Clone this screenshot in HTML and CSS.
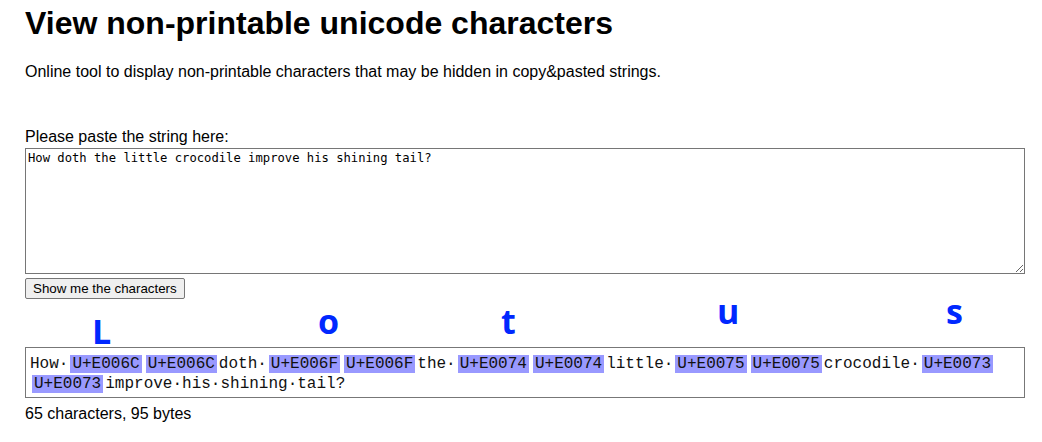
FILE: index.html
```html
<!DOCTYPE html>
<html lang="en">
<head>
<meta charset="utf-8">
<title>View non-printable unicode characters</title>
<link rel="stylesheet" href="styles.css">
</head>
<body>
<div class="page">
  <h1 class="title">View non-printable unicode characters</h1>
  <p class="intro">Online tool to display non-printable characters that may be hidden in copy&amp;pasted strings.</p>
  <form class="form">
    <label class="label" for="input">Please paste the string here:</label>
    <textarea id="input" class="input">How doth the little crocodile improve his shining tail?</textarea>
    <button type="button" class="btn">Show me the characters</button>
  </form>
  <div class="output">How·<span class="cp">U+E006C</span><span class="cp">U+E006C</span>doth·<span class="cp">U+E006F</span><span class="cp">U+E006F</span>the·<span class="cp">U+E0074</span><span class="cp">U+E0074</span>little·<span class="cp">U+E0075</span><span class="cp">U+E0075</span>crocodile·<span class="cp">U+E0073</span><span class="cp">U+E0073</span>improve·his·shining·tail?</div>
  <div class="count">65 characters, 95 bytes</div>
  <div class="notes">
    <span class="note note-l">L</span>
    <span class="note note-o">o</span>
    <span class="note note-t">t</span>
    <span class="note note-u">u</span>
    <span class="note note-s">s</span>
  </div>
</div>
</body>
</html>
```
FILE: styles.css
```css
html, body {
  margin: 0;
  padding: 0;
  background: #fff;
}
body {
  font-family: "Liberation Sans", Arial, sans-serif;
  font-size: 16px;
  color: #000;
}
.page {
  position: relative;
  padding: 0 17px 0 25px;
  width: 1000px;
}
.title {
  font-size: 32px;
  font-weight: bold;
  line-height: normal;
  margin: 5px 0 21px;
}
.intro {
  margin: 0;
  line-height: normal;
}
.form {
  margin: 47px 0 0;
  display: flex;
  flex-direction: column;
  align-items: flex-start;
}
.label {
  display: block;
  line-height: normal;
}
.input {
  display: block;
  box-sizing: border-box;
  width: 1000px;
  height: 126px;
  margin: 2px 0 0;
  padding: 2px;
  border: 1px solid #767676;
  font-family: "DejaVu Sans Mono", monospace;
  font-size: 12.2px;
  color: #000;
}
.btn {
  display: block;
  box-sizing: border-box;
  height: 21px;
  margin-top: 4px;
  padding: 1px 7px;
  border: 1px solid #767676;
  border-radius: 2px;
  background: #efefef;
  font-family: "Liberation Sans", Arial, sans-serif;
  font-size: 13.333px;
  color: #000;
  line-height: normal;
}
.output {
  box-sizing: border-box;
  width: 1000px;
  margin-top: 48px;
  padding: 6px 4px 3px;
  border: 1px solid #777;
  font-family: "Liberation Mono", "Courier New", monospace;
  font-size: 16px;
  line-height: 20px;
  color: #111;
}
.cp {
  display: inline-block;
  margin: 1px 2px;
  padding: 0 2px;
  background: #9999ff;
  line-height: 18px;
}
.count {
  margin-top: 7px;
  line-height: normal;
}
.note {
  position: absolute;
  font-family: "Open Sans", sans-serif;
  font-weight: 700;
  font-size: 34px;
  line-height: 1;
  color: #0028ff;
}
.note-l { left: 92px; top: 309px; }
.note-o { left: 318px; top: 299px; }
.note-t { left: 501px; top: 299px; }
.note-u { left: 717px; top: 289px; }
.note-s { left: 946px; top: 289px; }
```
